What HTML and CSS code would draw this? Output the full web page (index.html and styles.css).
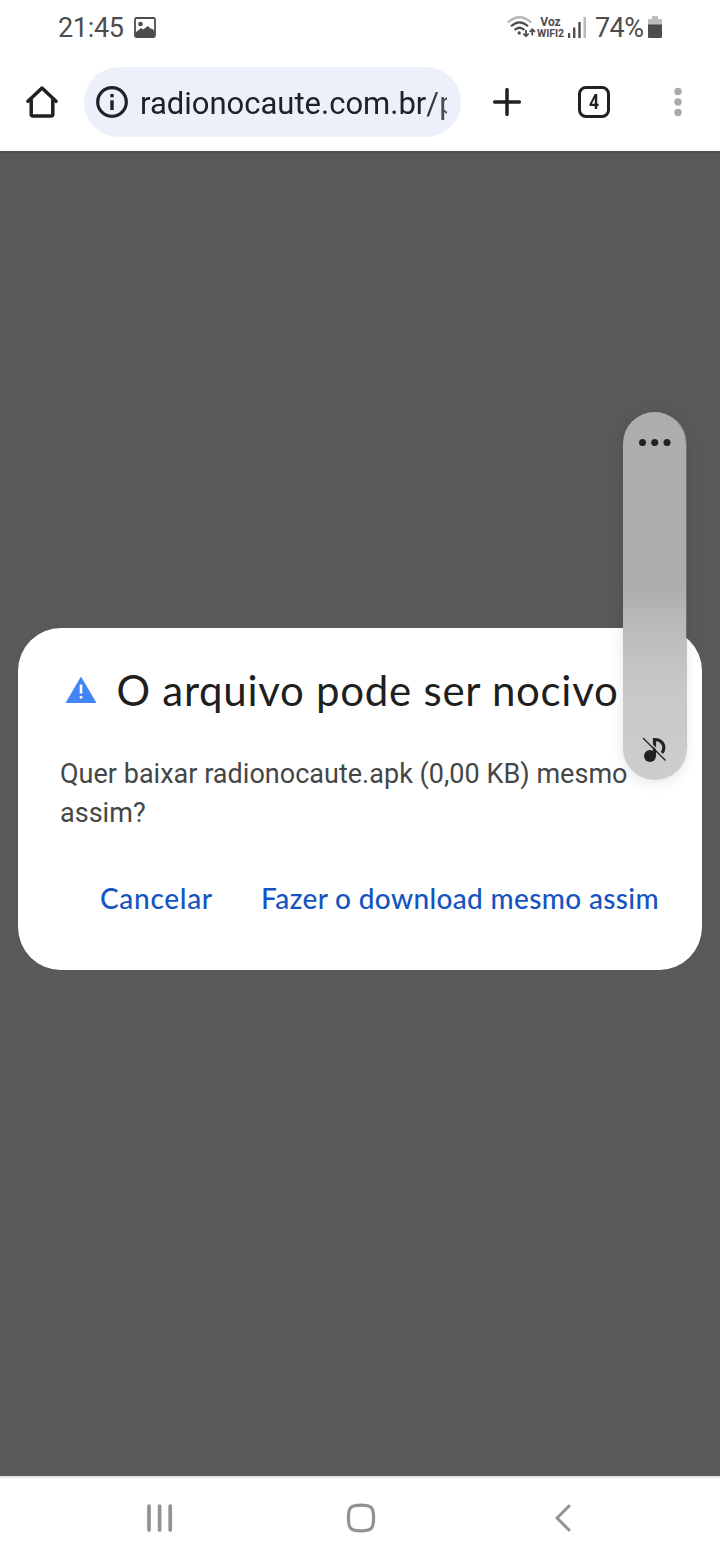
FILE: index.html
```html
<!DOCTYPE html>
<html lang="pt-BR">
<head>
<meta charset="utf-8">
<title>O arquivo pode ser nocivo</title>
<link rel="stylesheet" href="styles.css">
</head>
<body>
<div class="screen">
  <header class="status">
    <span class="clock">21:45</span>
    <svg class="photo" width="22" height="21" viewBox="0 0 22 21"><rect x="1" y="1" width="20" height="19" rx="1.5" fill="none" stroke="#4d4d4d" stroke-width="1.8"/><circle cx="6.5" cy="7" r="2.3" fill="#4d4d4d"/><path d="M1.500 15.500 4 13.500 7 11 9 12.500 14 9 17 12 18 11.500 20.500 14V19.500H1.500Z" fill="#4d4d4d"/></svg>
    <svg class="wifi" width="30" height="24" viewBox="0 0 30 24" fill="none" stroke-width="2.200"><path d="M.8 7.500Q12.500-3 24.200 7.500" stroke="#b5b5b5"/><path d="M4 11.300Q12.500 3.500 21 11.300M7.500 15Q12.500 10.500 17.500 15" stroke="#4d4d4d"/><circle cx="12.200" cy="18" r="1.700" fill="#4d4d4d"/><path d="M19 15V21M16.300 18.500 19 21.300 21.700 18.500M25.300 20.500V14.500M22.600 17 25.300 14.200 28 17" stroke="#4d4d4d" stroke-width="1.800"/></svg>
    <span class="carrier"><span class="voz">Voz</span><span class="wf">WIFI2</span></span>
    <svg class="signal" width="18" height="21" viewBox="0 0 18 21"><path d="M0 16h2.200v5H0zM5 10.500h2.400V21H5zM10.300 5h2.400v16h-2.400z" fill="#4d4d4d"/><path d="M15.500 0H18V21h-2.500z" fill="#b9b9b9"/></svg>
    <span class="percent">74%</span>
    <svg class="battery" width="14" height="22" viewBox="0 0 14 22"><path d="M4 0h6v3h3q1 0 1 1v5H0V4q0-1 1-1h3z" fill="#bdbdbd"/><path d="M0 8.500h14V21q0 1-1 1H1q-1 0-1-1z" fill="#4d4d4d"/></svg>
  </header>
  <div class="toolbar">
    <svg class="home" width="32" height="32" viewBox="0 0 32 32" fill="none" stroke="#202124" stroke-width="3.500" stroke-linejoin="round" stroke-linecap="round"><path d="M2 15.300 16 2 30 15.300"/><path d="M5.200 14V28.300Q5.200 30 7 30H25Q26.800 30 26.800 28.300V14"/></svg>
    <div class="omnibox">
      <svg width="32" height="32" viewBox="0 0 32 32"><circle cx="16" cy="16" r="14.300" fill="none" stroke="#202124" stroke-width="3.200"/><path d="M14.300 8h3.400v3.300h-3.400zM14.300 14.300h3.400V24h-3.400z" fill="#202124"/></svg>
      <span class="url">radionocaute.com.br/p</span>
    </div>
    <svg class="plus" width="28" height="28" viewBox="0 0 28 28"><path d="M14 1.700V26.300M1.700 14H26.300" stroke="#202124" stroke-width="3.500" stroke-linecap="round"/></svg>
    <span class="tabs"><span class="count">4</span></span>
    <svg class="more" width="8" height="30" viewBox="0 0 8 30" fill="#a9a9a9"><circle cx="4" cy="4.500" r="3.700"/><circle cx="4" cy="15" r="3.700"/><circle cx="4" cy="25.500" r="3.700"/></svg>
  </div>
  <main class="backdrop">
    <section class="dialog">
      <div class="heading">
        <svg width="32" height="28" viewBox="0 0 32 28"><path d="M16 .5 31.500 27H.5Z" fill="#4285f4"/><path d="M14.700 8.500h2.600v9h-2.600zM14.700 20h2.600v2.500h-2.600z" fill="#fff"/></svg>
        <h1>O arquivo pode ser nocivo</h1>
      </div>
      <p>Quer baixar radionocaute.apk (0,00 KB) mesmo assim?</p>
      <div class="actions"><button class="cancel">Cancelar</button><button class="download">Fazer o download mesmo assim</button></div>
    </section>
  </main>
  <aside class="volume">
    <svg width="32" height="8" viewBox="0 0 32 8" fill="#222"><circle cx="3.500" cy="3.500" r="3.500"/><circle cx="15.700" cy="3.500" r="3.500"/><circle cx="28" cy="3.500" r="3.500"/></svg>
    <svg class="mute" width="26" height="28" viewBox="0 0 26 28"><circle cx="9" cy="20" r="6" fill="#222"/><path d="M13.500 20V3.500C21 3.500 25.500 10 21 17" fill="none" stroke="#222" stroke-width="3.200"/><path d="M3.500 1 25.500 23" stroke="#c9c9ca" stroke-width="1.500"/><path d="M2 2 24.500 24.500" stroke="#222" stroke-width="1.300"/></svg>
  </aside>
  <nav class="navbar">
    <svg width="26" height="28" viewBox="0 0 26 28"><path d="M2 2V26M12.600 2V26M23.200 2V26" stroke="#929292" stroke-width="3.700" stroke-linecap="round"/></svg>
    <svg class="home-key" width="30" height="30" viewBox="0 0 30 30"><path d="M15 2.200C25.500 2.200 27.600 4.500 27.600 15S25.500 27.800 15 27.800 2.400 25.500 2.400 15 4.500 2.200 15 2.200Z" fill="none" stroke="#929292" stroke-width="3.200"/></svg>
    <svg width="16" height="28" viewBox="0 0 16 28"><path d="M14 2 2 14 14 26" fill="none" stroke="#929292" stroke-width="3" stroke-linecap="round"/></svg>
  </nav>
</div>
</body>
</html>
```
FILE: styles.css
```css
* { box-sizing: border-box; }
body { margin: 0; font-family: Roboto, sans-serif; }
svg { display: block; flex: none; }
.screen { position: relative; width: 720px; height: 1560px; display: flex; flex-direction: column; background: #fff; overflow: hidden; }
.status { height: 54px; padding: 0 58px 0 58px; display: flex; align-items: center; color: #4d4d4d; font-size: 27px; white-space: nowrap; }
.clock { width: 76px; padding-top: 1px; letter-spacing: -.3px; }
.photo { margin-right: auto; }
.wifi { margin-right: 0; }
.carrier { width: 27px; display: flex; flex-direction: column; align-items: center; font-weight: 700; line-height: 12px; margin-right: 4px; }
.voz { font-size: 12px; }
.wf { font-size: 10.5px; line-height: 11px; }
.signal { margin-right: 9px; }
.percent { width: 53px; padding-top: 1px; font-size: 27px; letter-spacing: -.6px; }
.toolbar { height: 97px; padding: 0 38px 2px 26px; display: flex; align-items: center; }
.omnibox { width: 377px; height: 70px; margin: 0 32px 0 26px; padding: 0 14px 0 12px; border-radius: 35px; background: #ebf0fa; display: flex; align-items: center; gap: 12px; }
.url { width: 307px; padding-top: 5px; overflow: hidden; white-space: nowrap; font-size: 31px; line-height: 40px; color: #202124; -webkit-mask-image: linear-gradient(to right, #000 280px, rgba(0,0,0,.75)); }
.tabs { width: 32px; height: 32px; margin: 0 64px 0 57px; border: 3.5px solid #202124; border-radius: 8px; text-align: center; color: #202124; }
.count { display: block; font-size: 21px; font-weight: 700; line-height: 26px; transform: scaleX(.84); }
.backdrop { height: 1325px; background: #595959; border-top: 2px solid #505050; padding: 475px 18px 0; }
.dialog { height: 342px; padding: 36px 42px 0; border-radius: 43px; background: #fff; }
.heading { display: flex; align-items: center; gap: 20px; padding-left: 4.5px; }
h1 { margin: 0; font: 400 42px/52px Lato, sans-serif; letter-spacing: .72px; color: #1f1f1f; white-space: nowrap; }
p { margin: 39px 0 0; font-size: 27px; line-height: 39px; letter-spacing: .02px; color: #444746; }
.actions { display: flex; justify-content: space-between; padding: 47px 1px 0 40px; }
button { border: 0; padding: 0; background: none; font: 500 28px/36px Lato, sans-serif; color: #1455c0; white-space: nowrap; }
.cancel { letter-spacing: .7px; }
.download { letter-spacing: .35px; }
.volume { position: absolute; left: 623px; top: 412px; width: 63px; height: 368px; padding: 27px 0 16px; border-radius: 32px; display: flex; flex-direction: column; align-items: center; justify-content: space-between; background: linear-gradient(#aeaeb0 0%, #abacae 35%, #acacad 46%, #bdbdbe 61%, #c8c8c9 75%, #cdcdcd 100%); box-shadow: 0 3px 14px rgba(0,0,0,.1), 1px 0 0 rgba(150,150,150,.45); }
.mute { margin-right: 2px; }
.navbar { height: 84px; border-top: 2px solid #e2e2e2; padding: 0 149px 2px 147px; display: flex; align-items: center; justify-content: space-between; }
.home-key { margin-right: 7px; }
```
